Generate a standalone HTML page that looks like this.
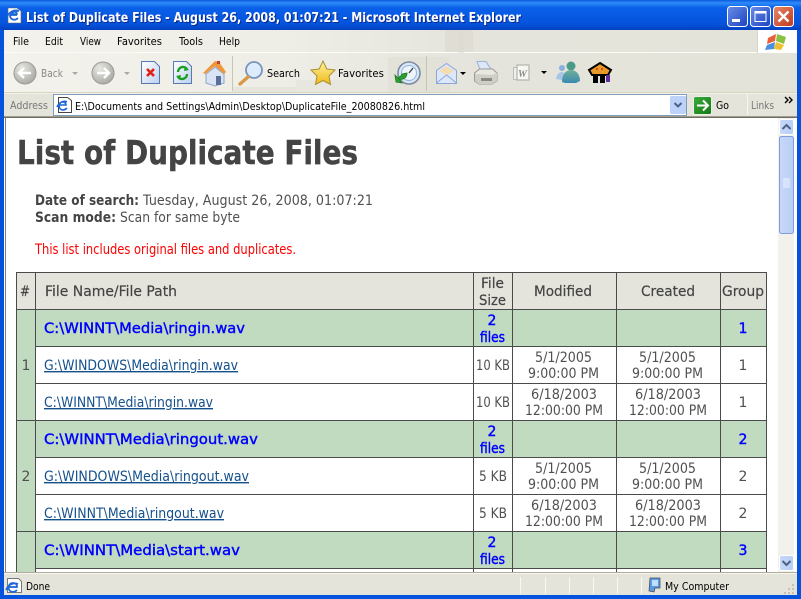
<!DOCTYPE html>
<html><head><meta charset="utf-8"><title>List of Duplicate Files</title>
<style>
html,body{margin:0;padding:0;width:801px;height:599px;overflow:hidden;background:#fff}
svg{display:block}
text{font-family:"DejaVu Sans","Liberation Sans",sans-serif;font-size:14px;fill:#505050;white-space:pre}
.ui{font-size:11px;fill:#000}
.gr{fill:#777}
.b{font-weight:bold;fill:#444}
.g{fill:#0000ff;stroke:#0000ff;stroke-width:.4px}
.l{fill:#14508c;text-decoration:underline}
.c{text-anchor:middle}
</style></head><body>
<svg width="801" height="599" viewBox="0 0 801 599" xmlns="http://www.w3.org/2000/svg">
<defs>
<linearGradient id="tb" x1="0" y1="0" x2="0" y2="1"><stop offset="0" stop-color="#0a5ae0"/><stop offset=".1" stop-color="#2f8cf8"/><stop offset=".25" stop-color="#0a60ea"/><stop offset=".8" stop-color="#0553dc"/><stop offset="1" stop-color="#0340c0"/></linearGradient>
<linearGradient id="bar" x1="0" y1="0" x2="1" y2="0"><stop offset="0" stop-color="#f3f2ec"/><stop offset=".35" stop-color="#eeede6"/><stop offset=".6" stop-color="#e5e4dc"/><stop offset="1" stop-color="#e4e3da"/></linearGradient>
<linearGradient id="bl" x1="0" y1="0" x2="1" y2="1"><stop offset="0" stop-color="#6a8ee8"/><stop offset="1" stop-color="#1c42c0"/></linearGradient>
<linearGradient id="rd" x1="0" y1="0" x2="1" y2="1"><stop offset="0" stop-color="#e8886a"/><stop offset="1" stop-color="#c0381a"/></linearGradient>
<linearGradient id="grn" x1="0" y1="0" x2="1" y2="1"><stop offset="0" stop-color="#3cab3c"/><stop offset="1" stop-color="#127812"/></linearGradient>
<radialGradient id="gb" cx=".35" cy=".3" r=".8"><stop offset="0" stop-color="#e8e8e4"/><stop offset="1" stop-color="#a6a69e"/></radialGradient>
<linearGradient id="doc" x1="0" y1="0" x2="1" y2="1"><stop offset="0" stop-color="#fff"/><stop offset="1" stop-color="#bcd0f0"/></linearGradient>
<linearGradient id="st" x1="0" y1="0" x2="0" y2="1"><stop offset="0" stop-color="#fff3a0"/><stop offset="1" stop-color="#f0b818"/></linearGradient>
<linearGradient id="sb" x1="0" y1="0" x2="1" y2="0"><stop offset="0" stop-color="#c8d8f8"/><stop offset="1" stop-color="#b8cef6"/></linearGradient>
<linearGradient id="ms" x1="0" y1="0" x2="0" y2="1"><stop offset="0" stop-color="#6fb09a"/><stop offset="1" stop-color="#3a8ab0"/></linearGradient>
</defs>

<!-- window frame -->
<rect width="801" height="599" fill="#0553dc"/>
<rect width="801" height="30" fill="url(#tb)"/>
<rect x="4" y="30" width="793" height="565" fill="#ece9d8"/>

<!-- title bar -->
<path d="M8 8h9l4 3v12H8z" fill="#fff" stroke="#666" stroke-width=".6"/>
<path d="M7 17c2-5 7-8 12-6-3 0-6 1-8 3h6c0-1-1-2-2-2" fill="none" stroke="#1b66d8" stroke-width="1.600"/>
<path d="M10 15h7M10 15c0 5 5 6 8 3" fill="none" stroke="#1b66d8" stroke-width="1.800"/>
<text x="27" y="23" class="b" style="font-size:13px;fill:#0a2a90" textLength="495" lengthAdjust="spacingAndGlyphs">List of Duplicate Files - August 26, 2008, 01:07:21 - Microsoft Internet Explorer</text>
<text x="26" y="22" class="b" style="font-size:13px;fill:#fff" textLength="495" lengthAdjust="spacingAndGlyphs">List of Duplicate Files - August 26, 2008, 01:07:21 - Microsoft Internet Explorer</text>
<rect x="727.5" y="6.5" width="20" height="20" rx="3" fill="url(#bl)" stroke="#fff"/>
<rect x="732" y="19" width="8" height="3" fill="#fff"/>
<rect x="750.5" y="6.5" width="20" height="20" rx="3" fill="url(#bl)" stroke="#fff"/>
<rect x="755" y="11.5" width="11" height="10" fill="none" stroke="#fff"/><rect x="755" y="11" width="11" height="2.5" fill="#fff"/>
<rect x="773.5" y="6.5" width="20" height="20" rx="3" fill="url(#rd)" stroke="#fff"/>
<path d="M778.5 11.5l10 10M788.5 11.5l-10 10" stroke="#fff" stroke-width="2.4"/>

<!-- menu bar -->
<rect x="4" y="30" width="793" height="22" fill="url(#bar)"/>
<rect x="4" y="52" width="753" height="1" fill="#fff" opacity=".8"/>
<rect x="757" y="30" width="40" height="23" fill="#fff"/>
<rect x="757" y="30" width="1" height="23" fill="#d8d5c6"/>
<rect x="445" y="30" width="28" height="22" fill="#e0ded4"/><rect x="458" y="30" width="6" height="28" fill="#dcdad0" opacity=".6"/>
<text x="13" y="45" class="ui" textLength="16" lengthAdjust="spacingAndGlyphs">File</text>
<text x="45" y="45" class="ui" textLength="18" lengthAdjust="spacingAndGlyphs">Edit</text>
<text x="80" y="45" class="ui" textLength="21" lengthAdjust="spacingAndGlyphs">View</text>
<text x="117" y="45" class="ui" textLength="45" lengthAdjust="spacingAndGlyphs">Favorites</text>
<text x="179" y="45" class="ui" textLength="24" lengthAdjust="spacingAndGlyphs">Tools</text>
<text x="219" y="45" class="ui" textLength="21" lengthAdjust="spacingAndGlyphs">Help</text>
<path d="M768 38l8-4-1 7-8 3z" fill="#e8603a"/><path d="M777 34l9 3-2 7-8-3z" fill="#8cc040"/><path d="M767 45l8-3-1 7-9 1z" fill="#4a90e0"/><path d="M776 42l8 3-3 5-7-1z" fill="#f0c030"/>

<!-- toolbar -->
<rect x="4" y="53" width="793" height="39" fill="url(#bar)"/>
<rect x="4" y="92" width="793" height="1" fill="#d8d4c0"/>
<rect x="388" y="57" width="62" height="35" fill="#e3e2d9"/>
<rect x="232" y="87" width="156" height="5" fill="#e6e5dd"/><rect x="296" y="80" width="92" height="12" fill="#e8e7df"/>
<rect x="232" y="56" width="1" height="35" fill="#c8c5b4"/>
<rect x="426" y="56" width="1" height="35" fill="#c8c5b4"/>
<!-- back/forward -->
<circle cx="25" cy="73" r="11" fill="url(#gb)" stroke="#9a9a92"/>
<path d="M31 73h-11M24 68l-5 5 5 5" fill="none" stroke="#fff" stroke-width="2.4"/>
<text x="41" y="77" class="ui gr" style="fill:#8a8a84" textLength="22" lengthAdjust="spacingAndGlyphs">Back</text>
<path d="M72 72h6l-3 3z" fill="#aaa"/>
<circle cx="103" cy="73" r="11" fill="url(#gb)" stroke="#9a9a92"/>
<path d="M97 73h11M104 68l5 5-5 5" fill="none" stroke="#fff" stroke-width="2.4"/>
<path d="M124 72h6l-3 3z" fill="#aaa"/>
<!-- stop -->
<path d="M141.500 61.500h13l5 5v17h-18z" fill="url(#doc)" stroke="#5a78b0"/>
<path d="M147 69l7 7M154 69l-7 7" stroke="#e02010" stroke-width="2.6"/>
<!-- refresh -->
<path d="M173.500 61.500h13l5 5v17h-18z" fill="url(#doc)" stroke="#5a78b0"/>
<path d="M178 72a5 5 0 0 1 9-3M187 74a5 5 0 0 1-9 3" fill="none" stroke="#1aa020" stroke-width="2.4"/>
<path d="M185 66l4 4-5 1zM180 80l-4-4 5-1z" fill="#1aa020"/>
<!-- home -->
<path d="M206 74l9-7 9 7v9l-9 3-9-3z" fill="#d8e4f6" stroke="#90a4c8"/>
<path d="M203 73l12-12 4 1 7 10-2 2-9-8-10 8z" fill="#f09838"/>
<rect x="216" y="76" width="5" height="9" fill="#5a6e9a"/><rect x="217" y="61" width="3" height="3" fill="#c04030"/>
<!-- search -->
<circle cx="254" cy="70" r="8" fill="#dcecfc" stroke="#7a94c0" stroke-width="1.8"/>
<path d="M248 77l-8 7" stroke="#d89848" stroke-width="3.400" stroke-linecap="round"/>
<text x="267" y="77" class="ui" textLength="33" lengthAdjust="spacingAndGlyphs">Search</text>
<!-- favorites -->
<path d="M323 61l3.800 8 8.200 1-6 6 1.500 8.500-7.500-4-7.500 4 1.500-8.500-6-6 8.200-1z" fill="url(#st)" stroke="#a89030"/>
<text x="338" y="77" class="ui" textLength="46" lengthAdjust="spacingAndGlyphs">Favorites</text>
<!-- history -->
<circle cx="409" cy="73" r="11" fill="#d8e6f6" stroke="#7d8aa0" stroke-width="1.600"/>
<circle cx="409" cy="73" r="7.500" fill="#eef4fc" stroke="#90b4e0"/>
<path d="M409 73l4-5" stroke="#444" stroke-width="1.400"/>
<path d="M407 73a6 6 0 0 1-8 6l3 4-6-1-1-7 2 2a4 4 0 0 0 5-3z" fill="#2aa030" stroke="#1a7a20" stroke-width=".8"/>
<!-- mail -->
<path d="M436.500 70.500l10-7 10 7v13h-20z" fill="#dce8fa" stroke="#8ca6d8"/>
<path d="M439 71l7-5 8 5-7 4z" fill="#f2dcb0"/>
<path d="M436.500 83l10-8 10 8" fill="none" stroke="#8ca6d8"/>
<path d="M460 72h6l-3 3z" fill="#000"/>
<!-- printer -->
<path d="M477 61.500h9l5 8h-11z" fill="#dce8fa" stroke="#9ab0d8"/>
<path d="M474.500 73l5-4h13l4.500 4v8l-5 3h-13l-4.500-3z" fill="#e8e8e2" stroke="#9a9a94"/>
<path d="M475 74l17 1 5-2v8l-5 3h-13l-4-3z" fill="#cfcfc8"/>
<rect x="481" y="78" width="11" height="3" fill="#8a8a84"/>
<!-- word -->
<rect x="513.500" y="67.500" width="6" height="12" fill="#eee" stroke="#bbb"/>
<rect x="517" y="65" width="12" height="15" fill="#f6f6f2" stroke="#b4b4ac" stroke-width="1.200"/>
<text x="518" y="77" style="font-family:'Liberation Serif',serif;font-size:10px;fill:#8f8f88;font-style:italic;font-weight:bold">W</text>
<path d="M541 71h6l-3 3z" fill="#000"/>
<!-- messenger -->
<circle cx="562" cy="68" r="3" fill="#8ab0e0"/>
<path d="M556 79c1-5 3-7 6-7l3 1-3 7z" fill="#a8c4e8"/>
<circle cx="571" cy="66" r="4.500" fill="#4a9a88"/>
<path d="M562 82c0-8 4-12 9-12s9 4 9 11l-4 2h-11z" fill="url(#ms)"/>
<!-- last icon -->
<path d="M600 63l11 7-3 5h-16l-3-5z" fill="#e89a28" stroke="#000" stroke-width="2"/>
<rect x="593" y="75" width="5" height="8" fill="#000"/><rect x="600" y="75" width="5" height="8" fill="#000"/><rect x="606" y="75" width="4" height="7" fill="#6030a0"/>
<circle cx="597" cy="69" r=".9" fill="#c02010"/><circle cx="602" cy="69" r=".9" fill="#c02010"/>

<!-- address bar -->
<rect x="4" y="93" width="793" height="23" fill="#e5e4db"/>
<rect x="4" y="93" width="793" height="1" fill="#f3f2ea"/>
<rect x="4" y="116" width="793" height="1" fill="#a09d8e"/>
<text x="10" y="109" class="ui gr" style="fill:#777" textLength="38" lengthAdjust="spacingAndGlyphs">Address</text>
<rect x="53.500" y="94.500" width="633" height="21" fill="#fff" stroke="#7f9db9"/>
<path d="M58.500 97.500h9l4 3v12h-13z" fill="#fff" stroke="#444"/>
<path d="M57 107c2-4 6-7 10-5M59 105h7c0-2-2-3-3-3-5 0-5 8 0 8 2 0 3-1 4-2" fill="none" stroke="#1b66d8" stroke-width="1.600"/>
<text x="75" y="110" class="ui" textLength="350" lengthAdjust="spacingAndGlyphs">E:\Documents and Settings\Admin\Desktop\DuplicateFile_20080826.html</text>
<rect x="670" y="96" width="16" height="18" rx="1.500" fill="#bcd2f8"/>
<path d="M674.500 103l3.500 3.500 3.500-3.500" fill="none" stroke="#4d6185" stroke-width="2"/>
<rect x="693.500" y="96.500" width="18" height="18" rx="2" fill="url(#grn)" stroke="#e8f0e8"/>
<path d="M697 105.500h10M703 100.500l5 5-5 5" fill="none" stroke="#fff" stroke-width="2"/>
<text x="716" y="109" class="ui" textLength="13" lengthAdjust="spacingAndGlyphs">Go</text>
<rect x="747" y="94" width="1" height="21" fill="#f6f5f0"/>
<text x="751" y="109" class="ui gr" style="fill:#777" textLength="23" lengthAdjust="spacingAndGlyphs">Links</text>
<path d="M785 97l3 3-3 3M789 97l3 3-3 3" fill="none" stroke="#000" stroke-width="1.400"/>

<!-- content -->
<rect x="4" y="117" width="793" height="457" fill="#fff"/>
<rect x="5" y="117" width="1" height="457" fill="#7f7f78"/>
<rect x="4" y="117" width="793" height="1" fill="#6f6d62"/>
<text x="17" y="164" class="b" style="font-size:33px;stroke:#444;stroke-width:.5px" textLength="341" lengthAdjust="spacingAndGlyphs">List of Duplicate Files</text>
<text x="35" y="205" class="b" textLength="104" lengthAdjust="spacingAndGlyphs">Date of search:</text>
<text x="143" y="205" textLength="230" lengthAdjust="spacingAndGlyphs">Tuesday, August 26, 2008, 01:07:21</text>
<text x="35" y="222" class="b" textLength="81" lengthAdjust="spacingAndGlyphs">Scan mode:</text>
<text x="120" y="222" textLength="120" lengthAdjust="spacingAndGlyphs">Scan for same byte</text>
<text x="35" y="254" style="fill:#ff0000" textLength="261" lengthAdjust="spacingAndGlyphs">This list includes original files and duplicates.</text>

<!-- table backgrounds -->
<rect x="16" y="272" width="751" height="37" fill="#e5e4dc"/>
<rect x="16" y="309" width="19" height="264" fill="#c0dbbf"/>
<rect x="35" y="309" width="732" height="37" fill="#c0dbbf"/>
<rect x="35" y="420" width="732" height="37" fill="#c0dbbf"/>
<rect x="35" y="531" width="732" height="37" fill="#c0dbbf"/>
<!-- table lines -->
<g fill="#4b4b4b">
<rect x="16" y="272" width="751" height="1"/>
<rect x="16" y="309" width="751" height="1"/>
<rect x="35" y="346" width="732" height="1"/>
<rect x="35" y="383" width="732" height="1"/>
<rect x="16" y="420" width="751" height="1"/>
<rect x="35" y="457" width="732" height="1"/>
<rect x="35" y="494" width="732" height="1"/>
<rect x="16" y="531" width="751" height="1"/>
<rect x="35" y="568" width="732" height="1"/>
<rect x="16" y="272" width="1" height="302"/>
<rect x="35" y="272" width="1" height="302"/>
<rect x="473" y="272" width="1" height="302"/>
<rect x="512" y="272" width="1" height="302"/>
<rect x="616" y="272" width="1" height="302"/>
<rect x="720" y="272" width="1" height="302"/>
<rect x="766" y="272" width="1" height="302"/>
</g>
<!-- header -->
<text x="20" y="296" style="fill:#444;stroke:#444;stroke-width:.2px" textLength="10" lengthAdjust="spacingAndGlyphs">#</text>
<text x="45" y="296" style="fill:#444;stroke:#444;stroke-width:.2px" textLength="132" lengthAdjust="spacingAndGlyphs">File Name/File Path</text>
<text x="481" y="288" style="fill:#444;stroke:#444;stroke-width:.2px" textLength="23" lengthAdjust="spacingAndGlyphs">File</text>
<text x="479" y="305" style="fill:#444;stroke:#444;stroke-width:.2px" textLength="27" lengthAdjust="spacingAndGlyphs">Size</text>
<text x="534" y="296" style="fill:#444;stroke:#444;stroke-width:.2px" textLength="58" lengthAdjust="spacingAndGlyphs">Modified</text>
<text x="641" y="296" style="fill:#444;stroke:#444;stroke-width:.2px" textLength="54" lengthAdjust="spacingAndGlyphs">Created</text>
<text x="722" y="296" style="fill:#444;stroke:#444;stroke-width:.2px" textLength="42" lengthAdjust="spacingAndGlyphs">Group</text>

<!-- index -->
<text x="26" y="370" class="c">1</text>
<text x="26" y="481" class="c">2</text>

<!-- group 1 -->
<text x="44" y="333" class="g" textLength="201" lengthAdjust="spacingAndGlyphs">C:\WINNT\Media\ringin.wav</text>
<text x="492" y="325" class="g c">2</text>
<text x="480" y="342" class="g" textLength="25" lengthAdjust="spacingAndGlyphs">files</text>
<text x="743" y="333" class="g c">1</text>
<!-- row 1 -->
<text x="44" y="370" class="l" textLength="194" lengthAdjust="spacingAndGlyphs">G:\WINDOWS\Media\ringin.wav</text>
<text x="476" y="370" textLength="34" lengthAdjust="spacingAndGlyphs">10 KB</text>
<text x="535" y="362" textLength="57" lengthAdjust="spacingAndGlyphs">5/1/2005</text>
<text x="528" y="378" textLength="71" lengthAdjust="spacingAndGlyphs">9:00:00 PM</text>
<text x="639" y="362" textLength="57" lengthAdjust="spacingAndGlyphs">5/1/2005</text>
<text x="632" y="378" textLength="71" lengthAdjust="spacingAndGlyphs">9:00:00 PM</text>
<text x="743" y="370" class="c">1</text>
<!-- row 2 -->
<text x="44" y="407" class="l" textLength="169" lengthAdjust="spacingAndGlyphs">C:\WINNT\Media\ringin.wav</text>
<text x="476" y="407" textLength="34" lengthAdjust="spacingAndGlyphs">10 KB</text>
<text x="531" y="399" textLength="66" lengthAdjust="spacingAndGlyphs">6/18/2003</text>
<text x="525" y="415" textLength="78" lengthAdjust="spacingAndGlyphs">12:00:00 PM</text>
<text x="635" y="399" textLength="66" lengthAdjust="spacingAndGlyphs">6/18/2003</text>
<text x="629" y="415" textLength="78" lengthAdjust="spacingAndGlyphs">12:00:00 PM</text>
<text x="743" y="407" class="c">1</text>

<!-- group 2 -->
<text x="44" y="444" class="g" textLength="214" lengthAdjust="spacingAndGlyphs">C:\WINNT\Media\ringout.wav</text>
<text x="492" y="436" class="g c">2</text>
<text x="480" y="453" class="g" textLength="25" lengthAdjust="spacingAndGlyphs">files</text>
<text x="743" y="444" class="g c">2</text>
<!-- row 3 -->
<text x="44" y="481" class="l" textLength="205" lengthAdjust="spacingAndGlyphs">G:\WINDOWS\Media\ringout.wav</text>
<text x="479" y="481" textLength="28" lengthAdjust="spacingAndGlyphs">5 KB</text>
<text x="535" y="473" textLength="57" lengthAdjust="spacingAndGlyphs">5/1/2005</text>
<text x="528" y="489" textLength="71" lengthAdjust="spacingAndGlyphs">9:00:00 PM</text>
<text x="639" y="473" textLength="57" lengthAdjust="spacingAndGlyphs">5/1/2005</text>
<text x="632" y="489" textLength="71" lengthAdjust="spacingAndGlyphs">9:00:00 PM</text>
<text x="743" y="481" class="c">2</text>
<!-- row 4 -->
<text x="44" y="518" class="l" textLength="180" lengthAdjust="spacingAndGlyphs">C:\WINNT\Media\ringout.wav</text>
<text x="479" y="518" textLength="28" lengthAdjust="spacingAndGlyphs">5 KB</text>
<text x="531" y="510" textLength="66" lengthAdjust="spacingAndGlyphs">6/18/2003</text>
<text x="525" y="526" textLength="78" lengthAdjust="spacingAndGlyphs">12:00:00 PM</text>
<text x="635" y="510" textLength="66" lengthAdjust="spacingAndGlyphs">6/18/2003</text>
<text x="629" y="526" textLength="78" lengthAdjust="spacingAndGlyphs">12:00:00 PM</text>
<text x="743" y="518" class="c">2</text>

<!-- group 3 -->
<text x="44" y="555" class="g" textLength="196" lengthAdjust="spacingAndGlyphs">C:\WINNT\Media\start.wav</text>
<text x="492" y="547" class="g c">2</text>
<text x="480" y="564" class="g" textLength="25" lengthAdjust="spacingAndGlyphs">files</text>
<text x="743" y="555" class="g c">3</text>

<!-- scrollbar -->
<rect x="777" y="118" width="20" height="456" fill="#fff"/>
<rect x="778" y="118" width="16" height="456" fill="#f2f1eb"/>
<rect x="779.500" y="119.500" width="14" height="15" rx="2" fill="url(#sb)" stroke="#fff"/>
<path d="M782.500 129l4-4 4 4" fill="none" stroke="#4d6185" stroke-width="2"/>
<rect x="779.500" y="136.500" width="14" height="97" rx="2" fill="url(#sb)" stroke="#7f9ce0"/>
<path d="M783 179h7M783 181h7M783 183h7M783 185h7M783 187h7" stroke="#eef3fc" stroke-width="1"/>
<rect x="779.500" y="555.500" width="14" height="15" rx="2" fill="url(#sb)" stroke="#fff"/>
<path d="M782.500 561l4 4 4-4" fill="none" stroke="#4d6185" stroke-width="2"/>

<!-- status bar -->
<rect x="4" y="572" width="793" height="1" fill="#b0ad9e"/>
<rect x="4" y="573" width="793" height="1" fill="#f6f5ee"/>
<rect x="4" y="574" width="793" height="21" fill="#e5e4da"/>
<path d="M7.500 578.500h11l3 3v11h-14z" fill="#fff" stroke="#777"/>
<path d="M6 590c2-5 7-8 12-6M9 587h8c0-3-2-4-4-4-6 0-6 9 0 9 2 0 3-1 4-2" fill="none" stroke="#1b66d8" stroke-width="1.700"/>
<text x="26" y="590" class="ui" textLength="24" lengthAdjust="spacingAndGlyphs">Done</text>
<g fill="#f8f7f2"><rect x="520" y="577" width="1" height="17"/><rect x="545" y="577" width="1" height="17"/><rect x="569" y="577" width="1" height="17"/><rect x="593" y="577" width="1" height="17"/><rect x="617" y="577" width="1" height="17"/><rect x="641" y="577" width="1" height="17"/></g>
<path d="M650 578h10v10h-5l-1 4-5-1z" fill="#5a9ae0" stroke="#445" stroke-width=".7"/>
<rect x="652" y="580" width="6" height="6" fill="#bfe0fa"/>
<text x="665" y="590" class="ui" textLength="64" lengthAdjust="spacingAndGlyphs">My Computer</text>
<g fill="#c6c3b4"><rect x="792" y="584" width="2" height="2"/><rect x="788" y="588" width="2" height="2"/><rect x="792" y="588" width="2" height="2"/><rect x="784" y="592" width="2" height="2"/><rect x="788" y="592" width="2" height="2"/><rect x="792" y="592" width="2" height="2"/></g>
</svg>
</body></html>
